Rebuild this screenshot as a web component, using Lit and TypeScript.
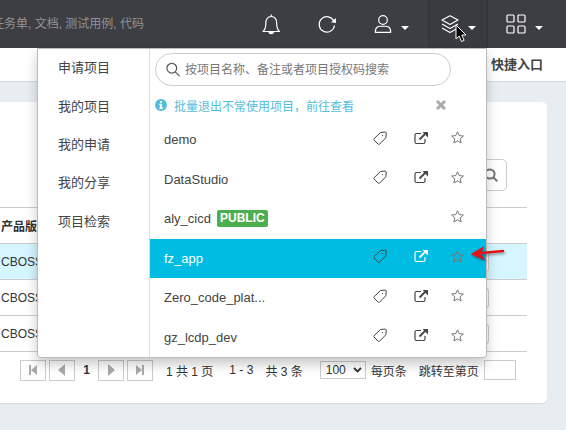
import { LitElement, html, css, svg, nothing } from "lit";
import { customElement, property } from "lit/decorators.js";
import { classMap } from "lit/directives/class-map.js";

const base = css`
  * {
    box-sizing: border-box;
  }
  button,
  input,
  select {
    font: inherit;
    color: inherit;
    margin: 0;
    padding: 0;
    border: 0;
    background: none;
    outline: none;
    border-radius: 0;
  }
  a {
    color: inherit;
    text-decoration: none;
  }
  ul {
    list-style: none;
    margin: 0;
    padding: 0;
  }
  svg {
    display: block;
    flex: none;
  }
`;

const caret = html`<svg width="8" height="18" viewBox="0 0 8 18" fill="currentColor"><path d="M0 11h8l-4 4z" /></svg>`;

const icons = {
  bell: svg`<path d="M1 17.500h16.500C15 15.500 14.700 13 14.700 9.500 14.700 5.500 13 2.500 9.250 2.500S3.800 5.500 3.800 9.500C3.800 13 3.500 15.500 1 17.500z" stroke-linejoin="round"/><path d="M9.250 2.500V.5M7 18.200c.3 2 4.200 2 4.500 0z" fill="currentColor"/>`,
  refresh: svg`<path d="M15.800 7A7.700 7.700 0 1 0 16.500 11.500"/><path d="M18 4v5l-5-.8z" fill="currentColor" stroke="none"/>`,
  user: svg`<circle cx="9" cy="6" r="4.300"/><path d="M1.300 18.300c0-7 4-6 7.700-6s7.700-1 7.700 6z" stroke-linejoin="round"/>`,
  layers: svg`<path d="M9 1.800l8 4.200-8 4.500L1 6zM1 10l8 4.500 8-4.500M1 14l8 4.500 8-4.500" stroke-linejoin="round"/>`,
  grid: svg`<rect x="1" y="1" width="7" height="7" rx="1"/><rect x="12" y="1" width="7" height="7" rx="1"/><rect x="1" y="12" width="7" height="7" rx="1"/><rect x="12" y="12" width="7" height="7" rx="1"/>`,
};

interface Project {
  name: string;
  isPublic?: boolean;
  active?: boolean;
}

const projects: Project[] = [
  { name: "demo" },
  { name: "DataStudio" },
  { name: "aly_cicd", isPublic: true },
  { name: "fz_app", active: true },
  { name: "Zero_code_plat..." },
  { name: "gz_lcdp_dev" },
];

@customElement("project-row")
class ProjectRow extends LitElement {
  @property({ attribute: false }) project!: Project;

  static styles = [
    base,
    css`
      :host {
        display: block;
      }
      .row {
        height: 100%;
        display: flex;
        align-items: center;
        padding: 0 14px 0 14px;
        color: #444;
      }
      .active {
        background: #00bce2;
        color: #fff;
      }
      .name {
        flex: 1;
        display: flex;
        align-items: center;
        gap: 6px;
      }
      .badge {
        background: #4cae4f;
        color: #fff;
        font-size: 12px;
        font-weight: bold;
        line-height: 17px;
        padding: 0 3px;
        border-radius: 2px;
      }
      .actions {
        display: grid;
        grid-template-columns: 40px 42px 30px;
        padding-bottom: 4px;
        color: #444;
      }
      .actions button {
        display: flex;
        justify-content: center;
        align-items: center;
        height: 16px;
      }
      .active .open {
        color: #fff;
      }
      .star {
        grid-column: 3;
        color: #777;
        position: relative;
      }
      .pointer {
        position: absolute;
        left: 28px;
        top: -2px;
        filter: drop-shadow(1px 2px 1px #0005);
      }
    `,
  ];

  render() {
    const p = this.project;
    return html`<div class=${classMap({ row: true, active: !!p.active })}>
      <a class="name" href="#">${p.name}${p.isPublic ? html`<span class="badge">PUBLIC</span>` : nothing}</a>
      <div class="actions">
        ${p.isPublic
          ? nothing
          : html`<button class="tag" aria-label="标签">
                <svg width="14" height="14" viewBox="0 0 14 14" fill="none" stroke="currentColor" stroke-linejoin="round">
                  <path d="M7.500 1.500l4.800-.500 1 1-.500 4.800-6.300 6.400q-.7.500-1.300 0L1 9q-.5-.6 0-1.200z" />
                  <circle cx="9.500" cy="4.600" r=".6" fill="currentColor" stroke="none" />
                </svg>
              </button>
              <button class="open" aria-label="打开">
                <svg width="14" height="14" viewBox="0 0 14 14" fill="none" stroke="currentColor" stroke-width="1.200">
                  <path d="M7 2.500H2.500Q1 2.500 1 4v7q0 1.500 1.500 1.500h7q1.500 0 1.500-1.500V8" />
                  <path d="M5.500 8.500L11 3" stroke-width="1.800" />
                  <path d="M8.500 1H14v5.500z" fill="currentColor" stroke="none" />
                </svg>
              </button>`}
        <button class="star" aria-label="收藏">
          <svg width="13" height="13" viewBox="0 0 13 13" fill="none" stroke="currentColor" stroke-linejoin="round">
            <path d="M6.500 .8l1.700 3.800 4.200.4-3.200 2.800.9 4.200-3.600-2.200L2.900 12l.9-4.200L.6 5l4.200-.4z" />
          </svg>
          ${p.active
            ? html`<svg class="pointer" width="36" height="16" viewBox="0 0 36 16" fill="none" stroke="#e31219" stroke-linecap="round" stroke-linejoin="round">
                <path d="M33 5L6 7.500" stroke-width="2.400" />
                <path d="M13 1.500L2 8l12 5-4-5.300z" fill="#e31219" stroke-width="1.400" />
              </svg>`
            : nothing}
        </button>
      </div>
    </div>`;
  }
}

@customElement("project-menu")
class ProjectMenu extends LitElement {
  static styles = [
    base,
    css`
      :host {
        display: flex;
        width: 450px;
        background: #fff;
        border: 1px solid #bbb;
        border-radius: 0 0 4px 4px;
        box-shadow: 0 6px 12px rgba(0, 0, 0, 0.22);
        font-size: 13px;
        color: #444;
      }
      .side {
        width: 112px;
        border-right: 1px solid #ddd;
      }
      .side ul {
        height: 192px;
        display: grid;
        grid-auto-rows: 1fr;
      }
      .side a {
        height: 100%;
        display: flex;
        align-items: center;
        padding: 0 0 3px 20px;
      }
      .main {
        flex: 1;
        min-width: 0;
      }
      .search {
        display: flex;
        align-items: center;
        gap: 5px;
        height: 33px;
        margin: 4px 35px 0 5px;
        padding: 0 10px;
        border: 1px solid #ccc;
        border-radius: 17px;
        color: #555;
        font-size: 12px;
      }
      .search input {
        flex: 1;
        min-width: 0;
      }
      .search input::placeholder {
        color: #777;
        opacity: 1;
      }
      .notice {
        display: flex;
        align-items: center;
        height: 34px;
        padding: 4px 40px 0 5px;
        gap: 7px;
        font-size: 12px;
        color: #53bddb;
      }
      .notice a {
        flex: 1;
      }
      .notice button {
        color: #aaa;
      }
      .projects {
        height: 237px;
        display: grid;
        grid-auto-rows: 1fr;
      }
      .projects li {
        display: grid;
      }
    `,
  ];

  render() {
    return html`
      <nav class="side">
        <ul>
          ${["申请项目", "我的项目", "我的申请", "我的分享", "项目检索"].map((t) => html`<li><a href="#">${t}</a></li>`)}
        </ul>
      </nav>
      <div class="main">
        <label class="search">
          <svg width="14" height="15" viewBox="0 0 14 15" fill="none" stroke="currentColor" stroke-width="1.200">
            <circle cx="5.800" cy="6.200" r="4.900" />
            <path d="M9.200 9.800l4.300 4.400" />
          </svg>
          <input type="text" placeholder="按项目名称、备注或者项目授权码搜索" />
        </label>
        <div class="notice">
          <svg width="12" height="12" viewBox="0 0 12 12">
            <circle cx="6" cy="6" r="6" fill="currentColor" />
            <path d="M5 2h2v1.700H5zM4.300 4.800H7v3.700h.8V10H4.300V8.500H5V6.200h-.7z" fill="#fff" />
          </svg>
          <a href="#">批量退出不常使用项目，前往查看</a>
          <button aria-label="关闭">
            <svg width="10" height="10" viewBox="0 0 10 10" stroke="currentColor" stroke-width="3"><path d="M1 1l8 8M9 1L1 9" /></svg>
          </button>
        </div>
        <ul class="projects">
          ${projects.map((p) => html`<li><project-row .project=${p}></project-row></li>`)}
        </ul>
      </div>
    `;
  }
}

@customElement("top-bar")
class TopBar extends LitElement {
  static styles = [
    base,
    css`
      :host {
        display: flex;
        height: 48px;
        background: #3d3e43;
        color: #fff;
        font-size: 12px;
      }
      .search {
        flex: 1;
        min-width: 0;
        margin-left: -8px;
        color: #aaa;
      }
      .search::placeholder {
        color: #919195;
        opacity: 1;
      }
      .item {
        display: flex;
        align-items: center;
        gap: 9px;
        height: 48px;
      }
      .plain {
        width: 56px;
        justify-content: center;
      }
      .user {
        width: 73px;
        padding-left: 19px;
      }
      .apps {
        width: 78px;
        padding-left: 18px;
      }
      .switcher {
        position: relative;
      }
      .current {
        width: 60px;
        padding-left: 12px;
        background: #3a3b40;
        border: solid #323338;
        border-width: 0 1px;
      }
      .cursor {
        position: absolute;
        left: 27px;
        top: 24px;
      }
      project-menu {
        position: absolute;
        top: 48px;
        right: 1px;
        z-index: 2;
      }
    `,
  ];

  private icon(shape: unknown, size = 18, h = 20) {
    return html`<svg width=${size} height=${h} viewBox="0 0 ${size} ${h}" fill="none" stroke="currentColor" stroke-width="1.200">${shape}</svg>`;
  }

  render() {
    return html`
      <input class="search" type="text" aria-label="搜索" placeholder="任务单, 文档, 测试用例, 代码" />
      <button class="item plain" aria-label="通知">${this.icon(icons.bell, 18, 21)}</button>
      <button class="item plain" aria-label="刷新">${this.icon(icons.refresh)}</button>
      <button class="item user" aria-label="用户">${this.icon(icons.user)}${caret}</button>
      <div class="switcher">
        <button class="item current" aria-label="项目">${this.icon(icons.layers)}${caret}</button>
        <svg class="cursor" width="12" height="19" viewBox="0 0 12 19">
          <path d="M1 1v14l3.200-3 2.300 5.500 2.600-1.100L6.800 11H11z" fill="#000" stroke="#fff" />
        </svg>
        <project-menu></project-menu>
      </div>
      <button class="item apps" aria-label="应用">${this.icon(icons.grid, 20)}${caret}</button>
    `;
  }
}

@customElement("version-card")
class VersionCard extends LitElement {
  static styles = [
    base,
    css`
      :host {
        display: block;
        background: #fff;
        border-radius: 0 5px 5px 0;
        box-shadow: 0 1px 1px #d5dade;
        padding: 57px 20px 22px 0;
        font-size: 12px;
        color: #333;
      }
      .tools {
        display: flex;
        justify-content: flex-end;
        padding-right: 20px;
        margin-bottom: 16px;
      }
      .find {
        width: 32px;
        height: 32px;
        display: flex;
        align-items: center;
        justify-content: center;
        border: 1px solid #ccc;
        border-radius: 0 5px 5px 0;
        color: #777;
      }
      table {
        width: 100%;
        border-collapse: collapse;
        border-top: 1px solid #ccc;
      }
      th,
      td {
        height: 36px;
        padding: 0 0 0 1px;
        text-align: left;
        border-bottom: 1px solid #ccc;
      }
      .selected {
        background: #d5f5ff;
      }
      .ops {
        padding-right: 38px;
        text-align: right;
      }
      .op {
        display: inline-block;
        vertical-align: middle;
        width: 28px;
        height: 22px;
        border: 1px solid #ccc;
        border-radius: 4px;
        background: #fff;
      }
      .pager {
        display: flex;
        align-items: center;
        height: 22px;
        margin-top: 7px;
        padding-left: 20px;
        white-space: nowrap;
      }
      .pager > * {
        flex: none;
      }
      .nav {
        width: 26px;
        height: 21px;
        display: flex;
        align-items: center;
        justify-content: center;
        border: 1px solid #ccc;
        color: #aaa;
      }
      .nav + .nav {
        margin-left: 3px;
      }
      .page {
        width: 23px;
        text-align: center;
      }
      .total {
        margin-left: 13px;
      }
      .range {
        margin-left: 16px;
      }
      .count {
        margin-left: 12px;
      }
      .size {
        display: flex;
        align-items: center;
        gap: 5px;
        margin-left: 17px;
      }
      .pick {
        display: grid;
        align-items: center;
      }
      .pick > * {
        grid-area: 1 / 1;
      }
      .pick svg {
        justify-self: end;
        margin-right: 4px;
        pointer-events: none;
      }
      .pick select {
        appearance: none;
        width: 46px;
        height: 18px;
        border: 1px solid #ccc;
        padding-left: 5px;
      }
      .jump {
        display: flex;
        align-items: center;
        gap: 5px;
        margin-left: 12px;
      }
      .jump input {
        width: 32px;
        height: 20px;
        border: 1px solid #ccc;
      }
    `,
  ];

  private nav(label: string, d: string) {
    return html`<button class="nav" aria-label=${label}>
      <svg width="10" height="12" viewBox="0 0 10 12" fill="currentColor"><path d=${d} /></svg>
    </button>`;
  }

  render() {
    return html`
      <div class="tools">
        <button class="find" aria-label="查找">
          <svg width="14" height="14" viewBox="0 0 14 14" fill="none" stroke="currentColor" stroke-width="2">
            <circle cx="6" cy="6" r="4.600" />
            <path d="M9.300 9.300l4 4" />
          </svg>
        </button>
      </div>
      <table>
        <thead>
          <tr><th>产品版</th><th></th></tr>
        </thead>
        <tbody>
          ${[true, false, false].map(
            (on) => html`<tr class=${classMap({ selected: on })}>
              <td>CBOSS</td>
              <td class="ops"><button class="op" aria-label="操作"></button></td>
            </tr>`
          )}
        </tbody>
      </table>
      <div class="pager">
        ${this.nav("首页", "M1 1h2v10H1zM9 1v10L3 6z")}${this.nav("上一页", "M8 0v12L1 6z")}
        <b class="page">1</b>
        ${this.nav("下一页", "M2 0v12l7-6z")}${this.nav("末页", "M7 1h2v10H7zM1 1v10l6-5z")}
        <span class="total">1 共 1 页</span><span class="range">1 - 3</span><span class="count">共 3 条</span>
        <label class="size">
          <span class="pick">
            <select><option>100</option></select>
            <svg width="9" height="6" viewBox="0 0 9 6" fill="none" stroke="#333" stroke-width="1.800"><path d="M1 1l3.500 3.500L8 1" /></svg>
          </span>
          每页条
        </label>
        <label class="jump">跳转至第页<input type="text" /></label>
      </div>
    `;
  }
}

@customElement("app-root")
class AppRoot extends LitElement {
  static styles = [
    base,
    css`
      :host {
        display: block;
        min-height: 100vh;
        overflow: hidden;
        background: #e8edf1;
        font-family: "Liberation Sans", "Noto Sans CJK SC", sans-serif;
      }
      .subnav {
        display: flex;
        justify-content: flex-end;
        align-items: center;
        height: 34px;
        padding: 0 23px 2px 0;
        background: #fff;
        border-bottom: 1px solid #d5dade;
        font-size: 13px;
        font-weight: bold;
        color: #444;
      }
      version-card {
        margin: 20px 19px 20px 0;
      }
    `,
  ];

  render() {
    return html`
      <top-bar></top-bar>
      <nav class="subnav"><a href="#">快捷入口</a></nav>
      <version-card></version-card>
    `;
  }
}
